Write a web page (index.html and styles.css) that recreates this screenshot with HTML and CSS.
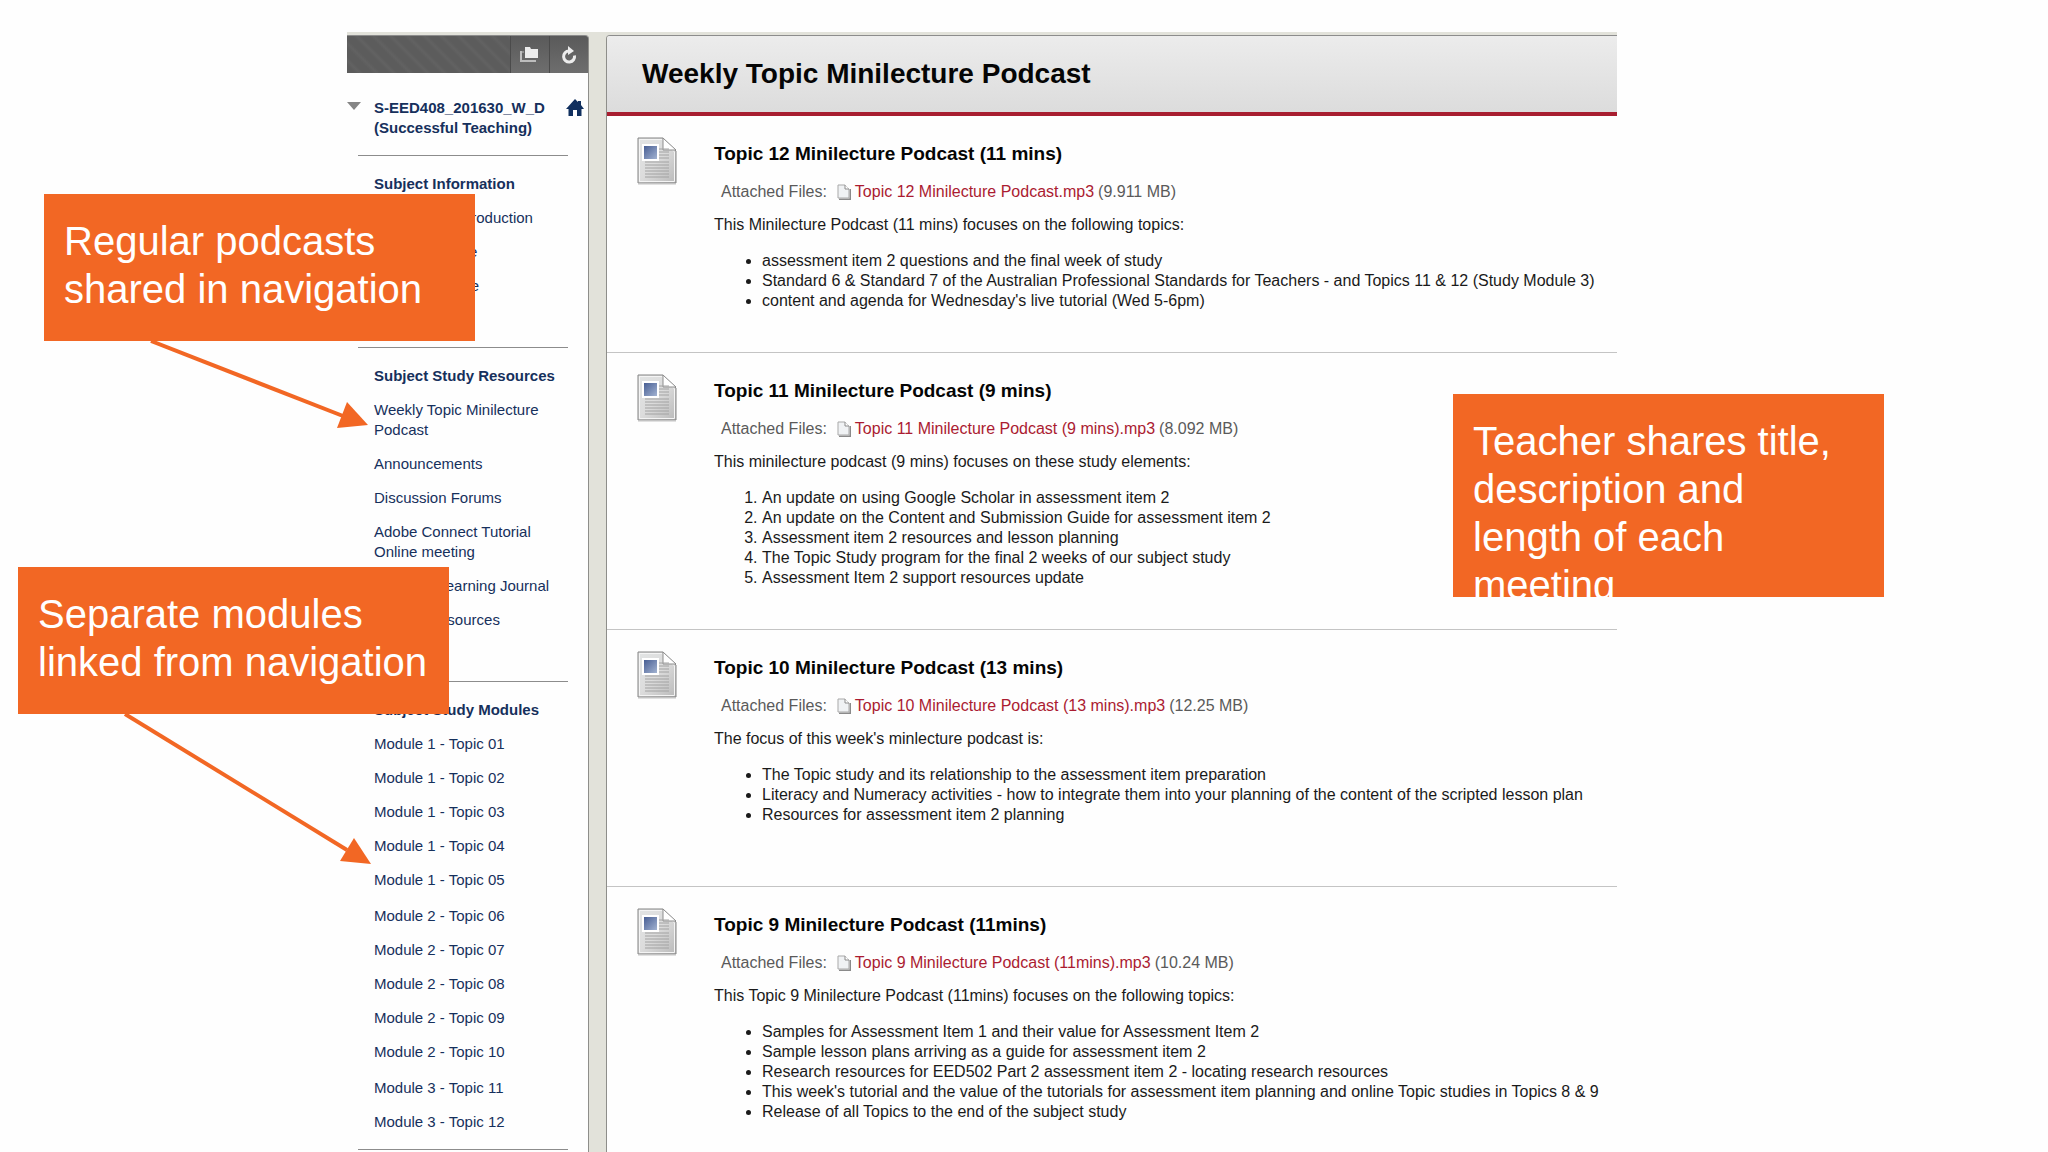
FILE: index.html
```
<!DOCTYPE html>
<html lang="en">
<head>
	<meta charset="utf-8">
	<title>Weekly Topic Minilecture Podcast</title>
	<link rel="stylesheet" href="styles.css">
</head>
<body>
	<!-- shared icons -->
	<svg class="sprite" width="0" height="0" aria-hidden="true">
		<defs>
			<linearGradient id="paper" x1="0" y1="0" x2="1" y2="1">
				<stop offset="0" stop-color="#e2e4e4"/>
				<stop offset="0.5" stop-color="#dcdcdc"/>
				<stop offset="1" stop-color="#b9b9b9"/>
			</linearGradient>
			<linearGradient id="photo" x1="0" y1="0" x2="1" y2="1">
				<stop offset="0" stop-color="#41588f"/>
				<stop offset="1" stop-color="#a9b9d6"/>
			</linearGradient>
			<symbol id="document" viewBox="0 0 40 48">
				<path d="M1 1H26L39 14V46H1Z" fill="url(#paper)" stroke="#858585" stroke-width="1"/>
				<path d="M2.500 2.500H25L37.500 15V44.500H2.500Z" fill="none" stroke="#f4f4f4" stroke-width="1"/>
				<path d="M26 1V13H39Z" fill="#fff" stroke="#8d8d8d" stroke-width="1"/>
				<path d="M22 12H32M22 15H32M22 18H32M22 21H32M8 25H32M8 28H32M8 31H32M8 34H32M8 37H32M8 40H32" stroke="#a2a2a2" stroke-width="1"/>
				<rect x="6" y="8" width="15" height="15" fill="url(#photo)" stroke="#fff" stroke-width="2"/>
				<path d="M1 47H39" stroke="#c4c4c4" stroke-width="1"/>
			</symbol>
			<symbol id="file" viewBox="0 0 14 16">
				<path d="M2 15.500H13.500V5" fill="none" stroke="#8a8a8a" stroke-width="2"/>
				<path d="M1 1H8L12 5V14H1Z" fill="#f0f2f4" stroke="#a9a9a9" stroke-width="1"/>
				<path d="M8 1V5H12" fill="#fff" stroke="#8c8c8c" stroke-width="1"/>
			</symbol>
		</defs>
	</svg>

	<div class="page">
		<div class="board">
			<aside class="sidebar">
				<div class="toolbar">
					<button type="button" aria-label="Open folder view">
						<svg width="20" height="17" viewBox="0 0 20 17">
							<path d="M5 1H10L11 3H18V12H5Z" fill="#ececec"/>
							<path d="M1 5V15H16" fill="none" stroke="#bdbdbd" stroke-width="2"/>
							<path d="M1 6H4" stroke="#bdbdbd" stroke-width="1"/>
						</svg>
					</button>
					<button type="button" aria-label="Refresh">
						<svg width="16" height="18" viewBox="0 0 16 18">
							<path d="M13.500 9.500A5.500 5.500 0 1 1 8 5" fill="none" stroke="#ececec" stroke-width="3"/>
							<path d="M7 0L13 5L7 9Z" fill="#ececec"/>
						</svg>
					</button>
				</div>

				<nav class="menu">
					<div class="course">
						<svg class="toggle" width="14" height="9" viewBox="0 0 14 9"><path d="M0 0H14L7 8Z" fill="#858585"/></svg>
						<a href="#" class="course-name">S-EED408_201630_W_D (Successful Teaching)</a>
						<a href="#" class="home" aria-label="Home">
							<svg width="18" height="18" viewBox="0 0 18 18"><path d="M9 0L12 3V2H15V6L18 10H15.500V17H11V11H7V17H2.500V10H0Z" fill="#11305f"/></svg>
						</a>
					</div>

					<section class="group spaced">
						<h2>Subject Information</h2>
						<ul>
							<li><a href="#">Welcome &amp; Introduction</a></li>
							<li><a href="#">Student Outline</a></li>
							<li><a href="#">Study Schedule</a></li>
						</ul>
					</section>

					<section class="group spaced">
						<h2>Subject Study Resources</h2>
						<ul>
							<li><a href="#">Weekly Topic Minilecture Podcast</a></li>
							<li><a href="#">Announcements</a></li>
							<li><a href="#">Discussion Forums</a></li>
							<li><a href="#">Adobe Connect Tutorial Online meeting</a></li>
							<li><a href="#">Personal Learning Journal</a></li>
							<li><a href="#">Subject Resources</a></li>
						</ul>
					</section>

					<section class="group">
						<h2>Subject Study Modules</h2>
						<ul>
							<li><a href="#">Module 1 - Topic 01</a></li>
							<li><a href="#">Module 1 - Topic 02</a></li>
							<li><a href="#">Module 1 - Topic 03</a></li>
							<li><a href="#">Module 1 - Topic 04</a></li>
							<li><a href="#">Module 1 - Topic 05</a></li>
						</ul>
						<ul>
							<li><a href="#">Module 2 - Topic 06</a></li>
							<li><a href="#">Module 2 - Topic 07</a></li>
							<li><a href="#">Module 2 - Topic 08</a></li>
							<li><a href="#">Module 2 - Topic 09</a></li>
							<li><a href="#">Module 2 - Topic 10</a></li>
						</ul>
						<ul>
							<li><a href="#">Module 3 - Topic 11</a></li>
							<li><a href="#">Module 3 - Topic 12</a></li>
						</ul>
					</section>
				</nav>
			</aside>

			<main class="content">
				<header class="title-bar">
					<h1>Weekly Topic Minilecture Podcast</h1>
				</header>

				<article class="entry">
					<svg class="doc" width="40" height="48"><use href="#document"/></svg>
					<div class="entry-body">
						<h3>Topic 12 Minilecture Podcast (11 mins)</h3>
						<p class="attached">
							<span class="label">Attached Files:</span>
							<svg width="14" height="16"><use href="#file"/></svg>
							<a href="#">Topic 12 Minilecture Podcast.mp3</a>
							<span>(9.911 MB)</span>
						</p>
						<p>This Minilecture Podcast (11 mins) focuses on the following topics:</p>
						<ul>
							<li>assessment item 2 questions and the final week of study</li>
							<li>Standard 6 &amp; Standard 7 of the Australian Professional Standards for Teachers - and Topics 11 &amp; 12 (Study Module 3)</li>
							<li>content and agenda for Wednesday's live tutorial (Wed 5-6pm)</li>
						</ul>
					</div>
				</article>

				<article class="entry">
					<svg class="doc" width="40" height="48"><use href="#document"/></svg>
					<div class="entry-body">
						<h3>Topic 11 Minilecture Podcast (9 mins)</h3>
						<p class="attached">
							<span class="label">Attached Files:</span>
							<svg width="14" height="16"><use href="#file"/></svg>
							<a href="#">Topic 11 Minilecture Podcast (9 mins).mp3</a>
							<span>(8.092 MB)</span>
						</p>
						<p>This minilecture podcast (9 mins) focuses on these study elements:</p>
						<ol>
							<li>An update on using Google Scholar in assessment item 2</li>
							<li>An update on the Content and Submission Guide for assessment item 2</li>
							<li>Assessment item 2 resources and lesson planning</li>
							<li>The Topic Study program for the final 2 weeks of our subject study</li>
							<li>Assessment Item 2 support resources update</li>
						</ol>
					</div>
				</article>

				<article class="entry roomy">
					<svg class="doc" width="40" height="48"><use href="#document"/></svg>
					<div class="entry-body">
						<h3>Topic 10 Minilecture Podcast (13 mins)</h3>
						<p class="attached">
							<span class="label">Attached Files:</span>
							<svg width="14" height="16"><use href="#file"/></svg>
							<a href="#">Topic 10 Minilecture Podcast (13 mins).mp3</a>
							<span>(12.25 MB)</span>
						</p>
						<p>The focus of this week's minlecture podcast is:</p>
						<ul>
							<li>The Topic study and its relationship to the assessment item preparation</li>
							<li>Literacy and Numeracy activities - how to integrate them into your planning of the content of the scripted lesson plan</li>
							<li>Resources for assessment item 2 planning</li>
						</ul>
					</div>
				</article>

				<article class="entry last">
					<svg class="doc" width="40" height="48"><use href="#document"/></svg>
					<div class="entry-body">
						<h3>Topic 9 Minilecture Podcast (11mins)</h3>
						<p class="attached">
							<span class="label">Attached Files:</span>
							<svg width="14" height="16"><use href="#file"/></svg>
							<a href="#">Topic 9 Minilecture Podcast (11mins).mp3</a>
							<span>(10.24 MB)</span>
						</p>
						<p>This Topic 9 Minilecture Podcast (11mins) focuses on the following topics:</p>
						<ul>
							<li>Samples for Assessment Item 1 and their value for Assessment Item 2</li>
							<li>Sample lesson plans arriving as a guide for assessment item 2</li>
							<li>Research resources for EED502 Part 2 assessment item 2 - locating research resources</li>
							<li>This week's tutorial and the value of the tutorials for assessment item planning and online Topic studies in Topics 8 &amp; 9</li>
							<li>Release of all Topics to the end of the subject study</li>
						</ul>
					</div>
				</article>
			</main>

			<!-- notes on top of the screen -->
			<div class="callout podcasts">Regular podcasts shared in navigation</div>
			<div class="callout modules">Separate modules linked from navigation</div>
			<div class="callout teacher">Teacher shares title, description and<br>length of each meeting</div>

			<svg class="arrow arrow-podcasts" width="224" height="90" viewBox="0 0 224 90">
				<path d="M4 0L196 75" stroke="#f26724" stroke-width="4"/>
				<path d="M200 61L190 87L221 84Z" fill="#f26724"/>
			</svg>
			<svg class="arrow arrow-modules" width="252" height="152" viewBox="0 0 252 152">
				<path d="M4 0L226 136" stroke="#f26724" stroke-width="4"/>
				<path d="M233 124L219 147L250 150Z" fill="#f26724"/>
			</svg>
		</div>
	</div>
</body>
</html>
```

FILE: styles.css
```
* {
	box-sizing: border-box;
}
body {
	margin: 0;
	background-color: #fefefe;
	font-family: "Liberation Sans", Arial, sans-serif;
	font-size: 15px;
	line-height: 20px;
	color: #1a1a1a;
}
h1, h2, h3, p, ul, ol {
	margin: 0;
}
a {
	text-decoration: none;
}
svg {
	display: block;
	flex-shrink: 0;
}
.sprite {
	position: absolute;
}

.page {
	display: grid;
	grid-template-columns: 347fr 1270fr 431fr;
	min-height: 100vh;
	padding-top: 32px;
	overflow: hidden;
}
.board {
	grid-column: 2;
	position: relative;
	display: grid;
	grid-template-columns: 242px minmax(0, 1fr);
	column-gap: 17px;
	padding-top: 3px;
	background-color: #e2e2da;
}

/* left menu */
.sidebar {
	background-color: #fefefe;
	border-top: 1px solid #8c8c8c;
	border-right: 1px solid #8e8e8a;
	border-top-right-radius: 4px;
	overflow: hidden;
}
.toolbar {
	display: flex;
	justify-content: flex-end;
	height: 37px;
	background: repeating-linear-gradient(45deg, #5c5c5c 0, #5c5c5c 6px, #626262 9px, #5c5c5c 12px);
}
.toolbar button {
	display: flex;
	align-items: center;
	justify-content: center;
	width: 39px;
	padding: 0;
	border: none;
	border-left: 1px solid #4b4b4b;
	background: linear-gradient(#5a5a5a, #6e6e6e);
}
.menu {
	display: flex;
	flex-direction: column;
	padding-top: 25px;
}
.menu a, .menu h2 {
	color: #16305c;
}
.course {
	display: flex;
	padding-bottom: 17px;
}
.toggle {
	margin: 4px 13px 0 0;
}
.course-name {
	width: 185px;
	font-weight: bold;
}
.home {
	margin: 1px 0 0 7px;
}
.group {
	display: flex;
	flex-direction: column;
	gap: 16px;
	margin: 0 20px 0 11px;
	padding: 18px 0 17px 16px;
	border-top: 1px solid #8c8c8c;
}
.group:last-child {
	border-bottom: 1px solid #8c8c8c;
}
.spaced {
	padding-bottom: 51px;
}
.group h2 {
	margin-bottom: -2px;
	font-size: 15px;
	white-space: nowrap;
}
.group ul {
	display: flex;
	flex-direction: column;
	gap: 14px;
	padding: 0;
	list-style: none;
}
.group li {
	margin-right: -10px;
}

/* podcast list */
.content {
	background-color: #fefefe;
	border-top: 1px solid #8c8c8c;
	border-left: 1px solid #8e8e8a;
	border-top-left-radius: 4px;
	font-size: 16px;
	overflow: hidden;
}
.title-bar {
	padding: 20px 35px;
	border-bottom: 4px solid #a81e30;
	background: linear-gradient(#ececec, #dcdcdc);
}
.title-bar h1 {
	font-size: 28px;
	line-height: 36px;
	color: #050505;
}
.entry {
	display: flex;
	gap: 37px;
	padding: 26px 10px 41px 30px;
	border-bottom: 1px solid #c4c4c4;
}
.roomy {
	padding-bottom: 61px;
}
.last {
	padding-bottom: 0;
	border-bottom: none;
}
.doc {
	margin-top: -5px;
}
.entry h3 {
	font-size: 19px;
	line-height: 24px;
	color: #050505;
}
.attached {
	display: flex;
	align-items: center;
	gap: 4px;
	margin: 16px 0 13px 7px;
	color: #5a5a5a;
}
.attached .label {
	margin-right: 6px;
}
.attached a {
	color: #ab1b31;
}
.entry ul, .entry ol {
	margin-top: 16px;
	padding-left: 48px;
}

/* orange notes */
.callout {
	position: absolute;
	width: 431px;
	height: 147px;
	padding: 23px 20px;
	background-color: #f26724;
	font-size: 40px;
	line-height: 48px;
	color: #fff;
	overflow: hidden;
}
.podcasts {
	left: -303px;
	top: 162px;
}
.modules {
	left: -329px;
	top: 535px;
}
.teacher {
	left: 1106px;
	top: 362px;
	height: 203px;
}
.arrow {
	position: absolute;
}
.arrow-podcasts {
	left: -200px;
	top: 309px;
}
.arrow-modules {
	left: -226px;
	top: 682px;
}
```
